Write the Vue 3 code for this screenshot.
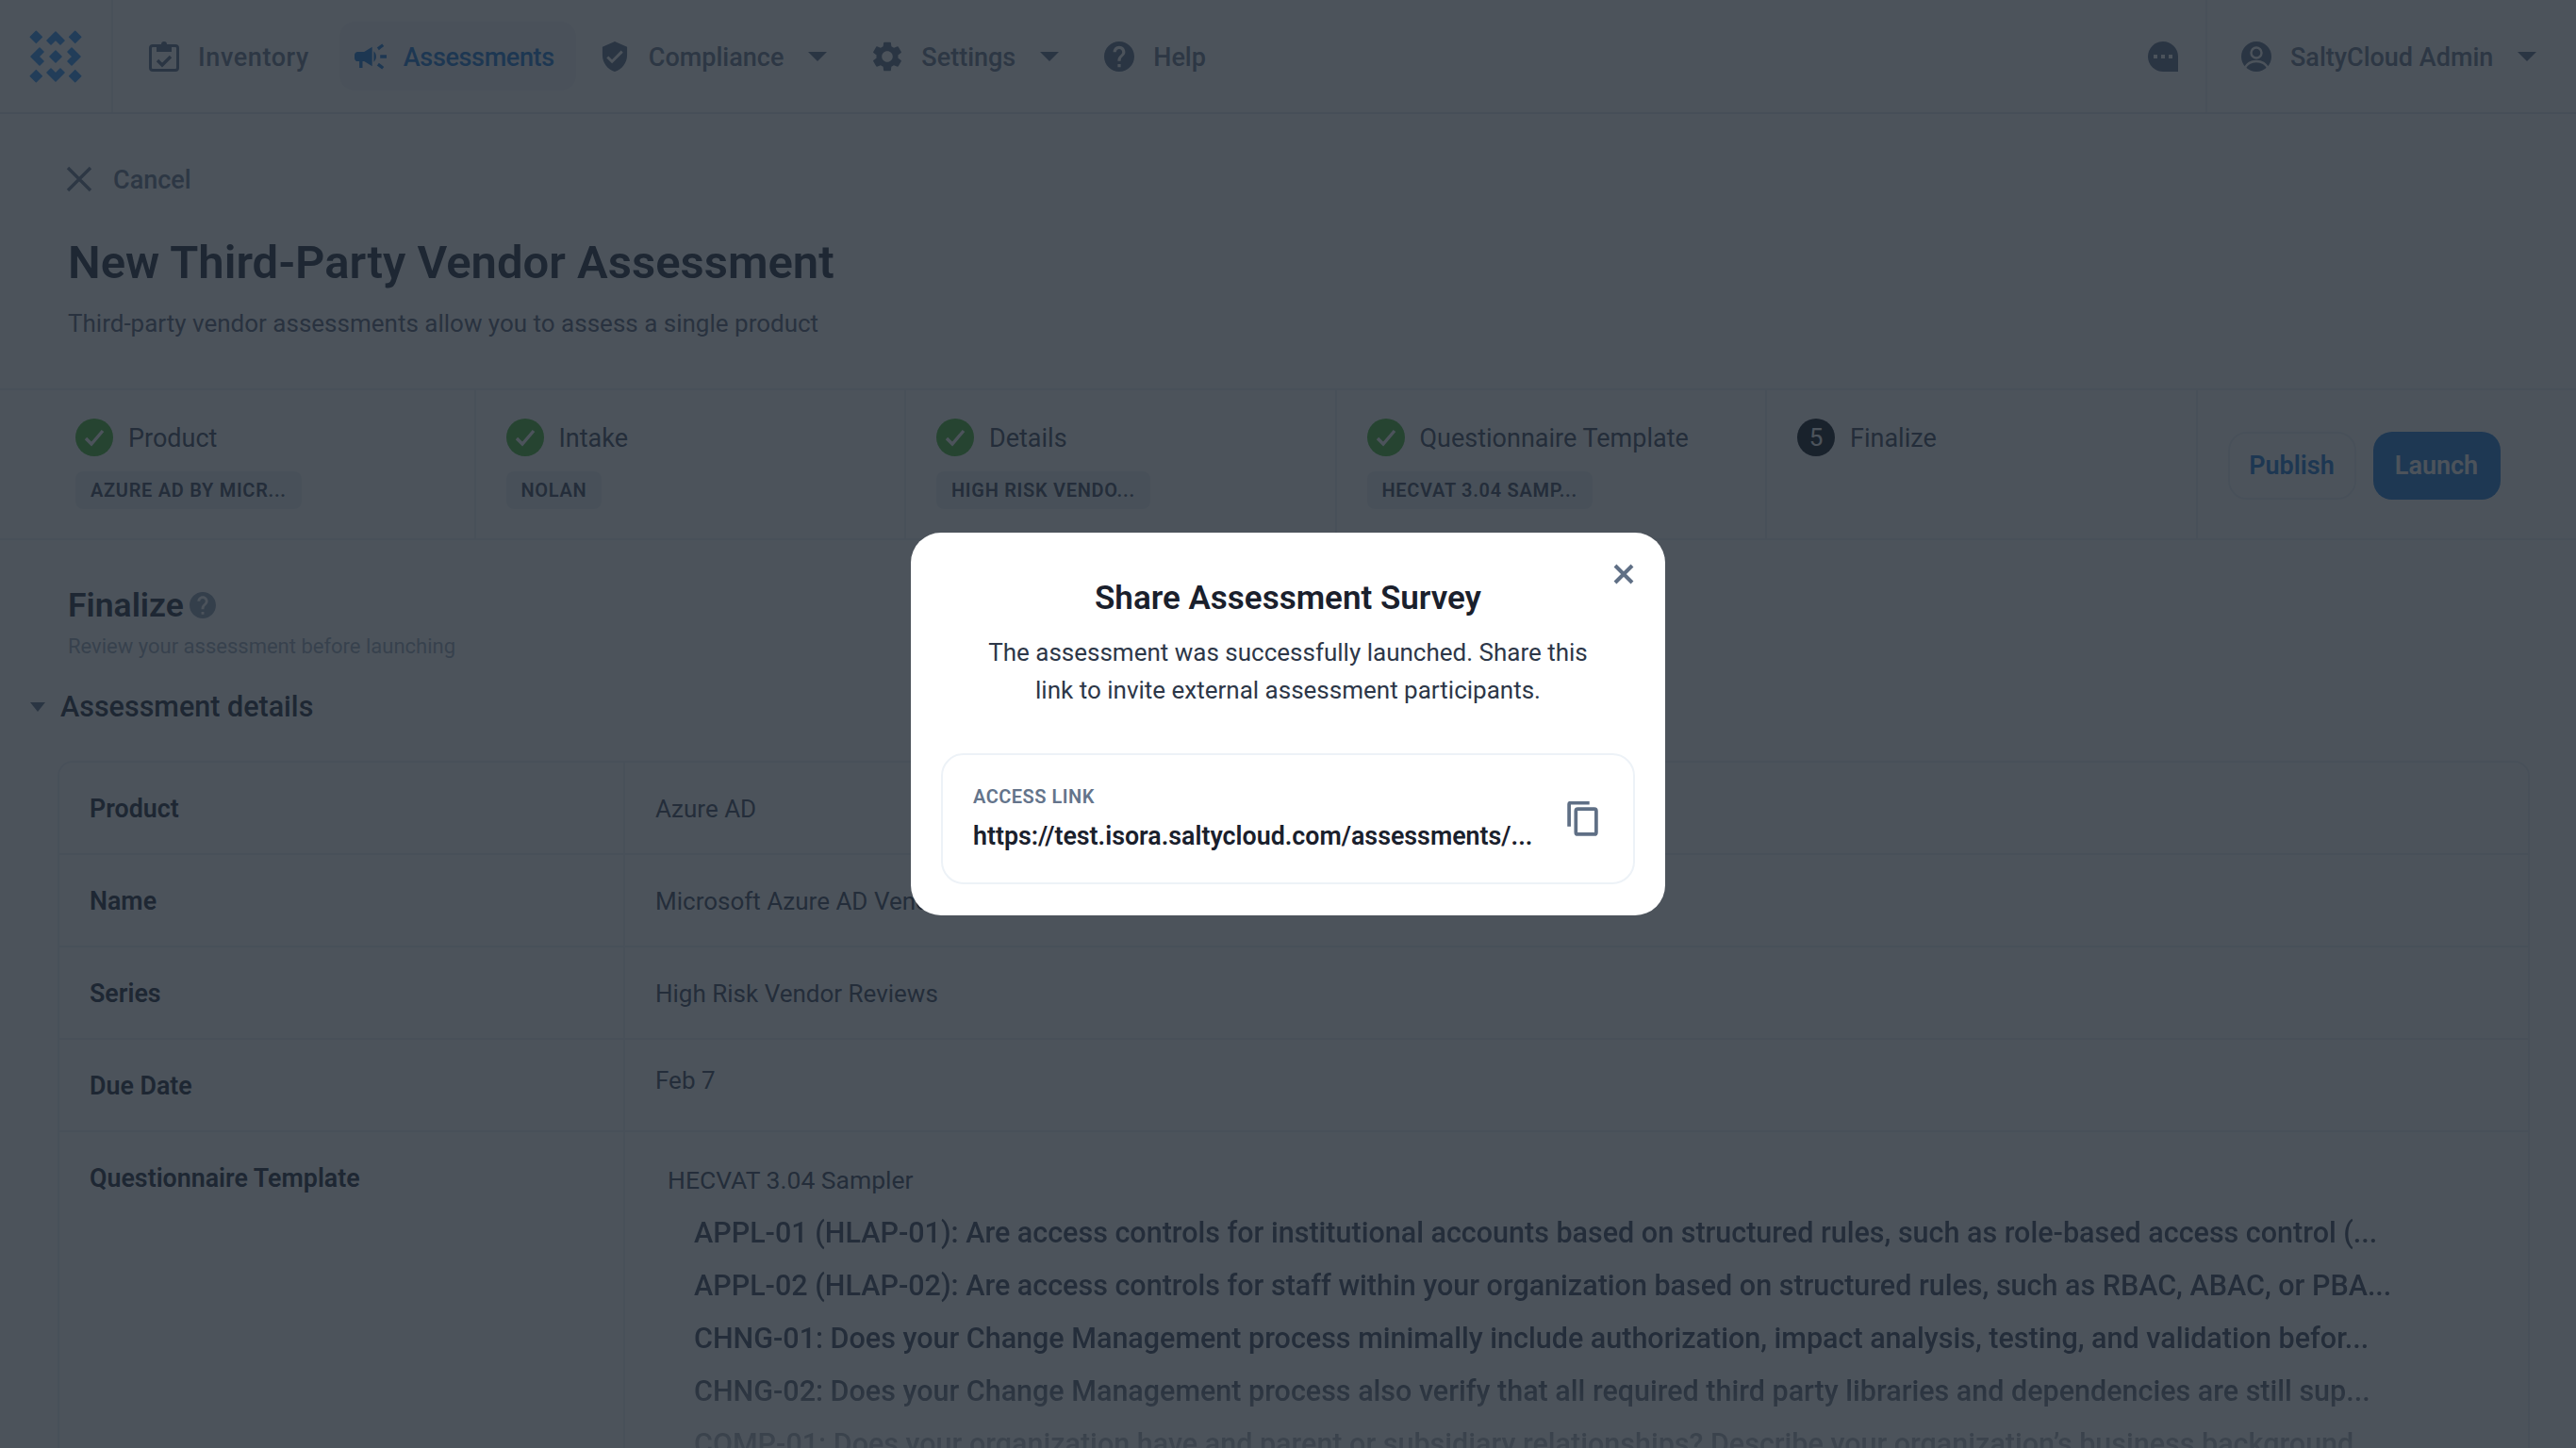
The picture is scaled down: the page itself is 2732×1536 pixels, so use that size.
<script setup>
const navItems = [
  { label: 'Inventory', icon: 'clipboard', textClass: 'spaced' },
  { label: 'Assessments', icon: 'campaign', active: true, textClass: 'tight' },
  { label: 'Compliance', icon: 'shield', caret: true },
  { label: 'Settings', icon: 'gear', caret: true },
  { label: 'Help', icon: 'help' },
];

const icons = {
  campaign: 'M18 11v2h4v-2h-4zm-2 6.61c.96.71 2.21 1.65 3.2 2.39.4-.53.8-1.07 1.2-1.6-.99-.74-2.24-1.68-3.2-2.4-.4.54-.8 1.08-1.2 1.61zM20.4 5.6c-.4-.53-.8-1.07-1.2-1.6-.99.74-2.24 1.68-3.2 2.4.4.53.8 1.07 1.2 1.6.96-.72 2.21-1.65 3.2-2.4zM4 9c-1.1 0-2 .9-2 2v2c0 1.1.9 2 2 2h1v4h2v-4h1l5 3V6L8 9H4zm11.5 3c0-1.33-.58-2.53-1.5-3.35v6.69c.92-.81 1.5-2.01 1.5-3.34z',
  shield: 'M12 1L3 5v6c0 5.55 3.84 10.74 9 12 5.16-1.26 9-6.45 9-12V5l-9-4zm-2 16l-4-4 1.41-1.41L10 14.17l6.59-6.59L18 9l-8 8z',
  gear: 'M19.14 12.94c.04-.3.06-.61.06-.94 0-.32-.02-.64-.07-.94l2.03-1.58a.49.49 0 0 0 .12-.61l-1.92-3.32a.488.488 0 0 0-.59-.22l-2.39.96c-.5-.38-1.03-.7-1.62-.94l-.36-2.54a.484.484 0 0 0-.48-.41h-3.84c-.24 0-.43.17-.47.41l-.36 2.54c-.59.24-1.13.57-1.62.94l-2.39-.96c-.22-.08-.47 0-.59.22L2.74 8.87c-.12.21-.08.47.12.61l2.03 1.58c-.05.3-.09.63-.09.94s.02.64.07.94l-2.03 1.58a.49.49 0 0 0-.12.61l1.92 3.32c.12.22.37.29.59.22l2.39-.96c.5.38 1.03.7 1.62.94l.36 2.54c.05.24.24.41.48.41h3.84c.24 0 .44-.17.47-.41l.36-2.54c.59-.24 1.13-.56 1.62-.94l2.39.96c.22.08.47 0 .59-.22l1.92-3.32c.12-.22.07-.47-.12-.61l-2.01-1.58zM12 15.6c-1.98 0-3.6-1.62-3.6-3.6s1.62-3.6 3.6-3.6 3.6 1.62 3.6 3.6-1.62 3.6-3.6 3.6z',
  help: 'M12 2C6.48 2 2 6.48 2 12s4.48 10 10 10 10-4.48 10-10S17.52 2 12 2zm1 17h-2v-2h2v2zm2.07-7.75l-.9.92C13.45 12.9 13 13.5 13 15h-2v-.5c0-1.1.45-2.1 1.17-2.83l1.24-1.26c.37-.36.59-.86.59-1.41 0-1.1-.9-2-2-2s-2 .9-2 2H8c0-2.21 1.79-4 4-4s4 1.79 4 4c0 .88-.36 1.68-.93 2.25z',
};

const steps = [
  { label: 'Product', tag: 'AZURE AD BY MICR...', done: true },
  { label: 'Intake', tag: 'NOLAN', done: true },
  { label: 'Details', tag: 'HIGH RISK VENDO...', done: true },
  { label: 'Questionnaire Template', tag: 'HECVAT 3.04 SAMP...', done: true },
  { label: 'Finalize', number: 5 },
];

const details = [
  { label: 'Product', value: 'Azure AD' },
  { label: 'Name', value: 'Microsoft Azure AD Vendor Review' },
  { label: 'Series', value: 'High Risk Vendor Reviews' },
  { label: 'Due Date', value: 'Feb 7', raised: true },
];

const questions = [
  'APPL-01 (HLAP-01): Are access controls for institutional accounts based on structured rules, such as role-based access control (...',
  'APPL-02 (HLAP-02): Are access controls for staff within your organization based on structured rules, such as RBAC, ABAC, or PBA...',
  'CHNG-01: Does your Change Management process minimally include authorization, impact analysis, testing, and validation befor...',
  'CHNG-02: Does your Change Management process also verify that all required third party libraries and dependencies are still sup...',
  'COMP-01: Does your organization have and parent or subsidiary relationships? Describe your organization’s business background...',
];

const logoDiamonds = [
  [19.3, 19.3],
  [60.7, 19.3],
  [40, 40],
  [19.3, 60.7],
  [60.7, 60.7],
];

const diamondPoints = ([x, y]) => `${x},${y - 6} ${x + 6},${y} ${x},${y + 6} ${x - 6},${y}`;
</script>

<template>
  <div class="page">
    <header class="nav">
      <div class="logo-cell">
        <svg class="logo" viewBox="9 9 62 62" width="62" height="62">
          <g fill="#3f9bf5" stroke="#3f9bf5" stroke-width="1.6" stroke-linejoin="round">
            <polygon v-for="d in logoDiamonds" :key="d.join()" :points="diamondPoints(d)" />
            <polygon points="40,14 49,23 45,27 40,22 35,27 31,23" />
            <polygon points="40,66 49,57 45,53 40,58 35,53 31,57" />
            <polygon points="14,40 23,31 27,35 22,40 27,45 23,49" />
            <polygon points="66,40 57,31 53,35 58,40 53,45 57,49" />
          </g>
        </svg>
      </div>

      <nav class="nav-items">
        <a v-for="item in navItems" :key="item.label" class="nav-item" :class="{ active: item.active }">
          <svg v-if="item.icon === 'clipboard'" class="nav-icon" viewBox="0 0 32 32">
            <rect x="1.5" y="4.5" width="29" height="26" rx="2.5" fill="none" stroke="currentColor" stroke-width="3" />
            <path d="M8 3h5a3 3 0 0 1 6 0h5v8H8z" fill="currentColor" />
            <path d="M9 20l5 5 9-9" fill="none" stroke="currentColor" stroke-width="3.4" />
          </svg>
          <svg v-else-if="item.icon === 'campaign'" class="nav-icon wide" viewBox="2 4 20 16">
            <path :d="icons.campaign" fill="currentColor" />
          </svg>
          <svg v-else class="nav-icon" :viewBox="item.icon === 'shield' ? '3 1 18 22' : '2.4 2 19.2 20'">
            <path :d="icons[item.icon]" fill="currentColor" />
          </svg>
          <span :class="item.textClass">{{ item.label }}</span>
          <i v-if="item.caret" class="caret"></i>
        </a>
      </nav>

      <div class="nav-right">
        <div class="chat-cell">
          <svg class="nav-icon" viewBox="0 0 32 32">
            <path d="M16 0a16 16 0 0 0 0 32h16V16A16 16 0 0 0 16 0z" fill="currentColor" />
            <path d="M6 14h4v4H6zM14 14h4v4h-4zM22 14h4v4h-4z" fill="#fff" />
          </svg>
        </div>
        <div class="user-cell">
          <svg class="nav-icon" viewBox="0 0 32 32">
            <circle cx="16" cy="16" r="16" fill="currentColor" />
            <circle cx="16" cy="12" r="5.500" fill="currentColor" stroke="#fff" stroke-width="2.4" />
            <path d="M3.500 28.500c3-6 8.500-7.500 12.500-7.500s9.500 1.500 12.500 7.500" fill="none" stroke="#fff" stroke-width="2.4" />
          </svg>
          <span>SaltyCloud Admin</span>
          <i class="caret"></i>
        </div>
      </div>
    </header>

    <main>
      <div class="cancel">
        <svg viewBox="0 0 28 28" width="28" height="28">
          <path d="M2 2l24 24M26 2L2 26" fill="none" stroke="currentColor" stroke-width="3.4" />
        </svg>
        <span>Cancel</span>
      </div>
      <h1 class="title">New Third-Party Vendor Assessment</h1>
      <p class="subtitle">Third-party vendor assessments allow you to assess a single product</p>

      <section class="steps">
        <div v-for="step in steps" :key="step.label" class="step">
          <div class="step-head">
            <span class="step-badge" :class="{ done: step.done }">
              <svg v-if="step.done" viewBox="0 0 40 40" width="40" height="40">
                <path d="M11 21l6 6 12-14" fill="none" stroke="#fff" stroke-width="3.4" />
              </svg>
              <template v-else>{{ step.number }}</template>
            </span>
            <span class="step-label">{{ step.label }}</span>
          </div>
          <span v-if="step.tag" class="tag">{{ step.tag }}</span>
        </div>
        <div class="step-actions">
          <button class="btn btn-ghost">Publish</button>
          <button class="btn btn-primary">Launch</button>
        </div>
      </section>

      <div class="section-head">
        <h2>Finalize</h2>
        <svg viewBox="2 2 20 20" width="28" height="28">
          <path :d="icons.help" fill="currentColor" />
        </svg>
      </div>
      <p class="section-sub">Review your assessment before launching</p>

      <h3 class="details-head"><i class="caret small"></i>Assessment details</h3>

      <div class="table">
        <div v-for="row in details" :key="row.label" class="row">
          <div class="cell-label">{{ row.label }}</div>
          <div class="cell-value" :class="{ raised: row.raised }">{{ row.value }}</div>
        </div>
        <div class="row row-template">
          <div class="cell-label">Questionnaire Template</div>
          <div class="cell-value">
            <div class="template-name">HECVAT 3.04 Sampler</div>
            <ul class="questions">
              <li v-for="q in questions" :key="q">{{ q }}</li>
            </ul>
          </div>
        </div>
      </div>
    </main>

    <div class="overlay">
      <div class="modal">
        <svg class="close" viewBox="0 0 24 24" width="24" height="24">
          <path d="M3 3l18 18M21 3L3 21" fill="none" stroke="currentColor" stroke-width="4" />
        </svg>
        <h2 class="modal-title">Share Assessment Survey</h2>
        <p class="modal-text">The assessment was successfully launched. Share this link to invite external assessment participants.</p>
        <div class="link-box">
          <div class="link-body">
            <div class="link-label">ACCESS LINK</div>
            <div class="link-url">https://test.isora.saltycloud.com/assessments/...</div>
          </div>
          <svg class="copy" viewBox="0 0 32 36" width="33" height="37">
            <path d="M2 26V3a1.500 1.500 0 0 1 1.500-1.500H23" fill="none" stroke="currentColor" stroke-width="3.600" />
            <rect x="9" y="8" width="21" height="26" rx="2" fill="none" stroke="currentColor" stroke-width="3.600" />
          </svg>
        </div>
      </div>
    </div>
  </div>
</template>

<style scoped>
.page {
  position: relative;
  width: 2732px;
  height: 1536px;
  overflow: hidden;
  background: #fff;
  font-family: Roboto, "Noto Sans", sans-serif;
  color: #4a5568;
  font-size: 26px;
}
.nav {
  display: flex;
  height: 121px;
  border-bottom: 2px solid #e2e8f0;
  box-sizing: border-box;
}
.logo-cell {
  width: 120px;
  flex: none;
  display: flex;
  align-items: center;
  justify-content: center;
  border-right: 2px solid #edf2f7;
  box-sizing: border-box;
}
.nav-items {
  display: flex;
  align-items: center;
  gap: 9px;
  padding-left: 22px;
}
.nav-item {
  display: flex;
  align-items: center;
  height: 73px;
  padding: 0 23px 0 16px;
  border-radius: 16px;
  color: #718096;
  font-size: 27px;
  font-weight: 500;
}
.nav-item.active {
  background: #f4f6f9;
  color: #2c7fd6;
}
.nav-item span {
  margin-left: 20px;
  padding-top: 2px;
}
.nav-item .spaced {
  letter-spacing: 0.6px;
}
.nav-item .tight {
  letter-spacing: -0.35px;
}
.nav-icon {
  width: 32px;
  height: 32px;
  flex: none;
  color: #667892;
}
.nav-icon.wide {
  width: 34px;
  margin-right: -2px;
}
.active .nav-icon {
  color: #2c7fd6;
}
.caret {
  display: inline-block;
  width: 0;
  height: 0;
  margin-left: 26px;
  border-left: 10px solid transparent;
  border-right: 10px solid transparent;
  border-top: 10px solid #667892;
}
.nav-right {
  margin-left: auto;
  display: flex;
  align-items: stretch;
}
.chat-cell {
  display: flex;
  align-items: center;
  padding-right: 29px;
  border-right: 2px solid #edf2f7;
}
.user-cell {
  display: flex;
  align-items: center;
  width: 391px;
  padding-left: 36px;
  box-sizing: border-box;
  color: #718096;
  font-size: 27px;
  font-weight: 500;
}
.user-cell span {
  margin-left: 20px;
  padding-top: 2px;
}
.cancel {
  display: flex;
  align-items: center;
  gap: 22px;
  height: 40px;
  margin: 49px 0 0 70px;
  color: #718096;
  font-size: 27px;
  font-weight: 500;
}
.cancel span {
  padding-top: 2px;
}
.title {
  margin: 39px 0 0 72px;
  font-size: 49px;
  line-height: 60px;
  font-weight: 600;
  color: #2d3748;
}
.subtitle {
  margin: 15px 0 0 72px;
  line-height: 38px;
  color: #5f6b80;
}
.steps {
  display: flex;
  height: 161px;
  margin-top: 50px;
  padding-left: 48px;
  border-top: 2px solid #edf2f7;
  border-bottom: 2px solid #edf2f7;
  box-sizing: border-box;
}
.step {
  width: 456.500px;
  flex: none;
  padding: 30px 0 0 32px;
  border-right: 2px solid #edf2f7;
  box-sizing: border-box;
}
.step-head {
  display: flex;
  align-items: center;
  gap: 16px;
  height: 40px;
  font-size: 27px;
}
.step-label {
  padding-top: 2px;
}
.step-badge {
  display: flex;
  align-items: center;
  justify-content: center;
  width: 40px;
  height: 40px;
  border-radius: 50%;
  background: #1a202c;
  color: #fff;
  font-size: 26px;
}
.step-badge.done {
  background: #52ba40;
}
.tag {
  display: inline-block;
  margin-top: 16px;
  padding: 0 16px;
  line-height: 40px;
  border-radius: 8px;
  background: #edf2f7;
  font-size: 20px;
  font-weight: 600;
  letter-spacing: 0.7px;
}
.step-actions {
  display: flex;
  align-items: center;
  gap: 18px;
  padding-left: 32px;
  margin-top: 2px;
}
.btn {
  height: 72px;
  border-radius: 20px;
  font: 600 27px Roboto, sans-serif;
}
.btn-ghost {
  width: 136px;
  background: #fff;
  border: 2px solid #edf2f7;
  color: #2c7fd6;
}
.btn-primary {
  width: 135px;
  background: #2d83da;
  border: 0;
  color: #fff;
}
.section-head {
  display: flex;
  align-items: center;
  gap: 6px;
  margin: 45px 0 0 72px;
  height: 48px;
  color: #94a3b8;
}
.section-head h2 {
  margin: 0;
  font-size: 35.500px;
  font-weight: 600;
  color: #2d3748;
}
.section-sub {
  margin: 4px 0 0 72px;
  font-size: 22px;
  line-height: 32px;
  color: #a0aec0;
}
.details-head {
  display: flex;
  align-items: center;
  margin: 26px 0 0 32px;
  font-size: 30.500px;
  line-height: 44px;
  font-weight: 500;
  color: #2d3748;
}
.caret.small {
  margin: 0 16px 0 0;
  border-left-width: 8px;
  border-right-width: 8px;
  border-top-width: 10px;
}
.table {
  margin: 35px 49px 0 61px;
  border: 2px solid #edf2f7;
  border-radius: 16px 16px 0 0;
}
.row {
  display: grid;
  grid-template-columns: 600px 1fr;
  height: 98px;
  border-bottom: 2px solid #edf2f7;
  box-sizing: border-box;
}
.cell-label {
  display: flex;
  align-items: center;
  padding: 2px 0 0 32px;
  font-size: 26.800px;
  font-weight: 600;
  color: #2d3748;
  border-right: 2px solid #edf2f7;
}
.cell-value {
  display: flex;
  align-items: center;
  padding: 1px 0 0 32px;
}
.cell-value.raised {
  padding: 0 0 11px 32px;
}
.row-template {
  height: 500px;
  border-bottom: 0;
}
.row-template .cell-label {
  align-items: flex-start;
  padding-top: 29px;
  line-height: 40px;
}
.row-template .cell-value {
  display: block;
  padding: 31px 0 0 45px;
}
.template-name {
  line-height: 40px;
  font-size: 26.500px;
}
.questions {
  list-style: none;
  margin: 8px 0 0;
  padding: 0 0 0 28px;
  font-size: 30.500px;
  font-weight: 500;
  line-height: 56px;
  white-space: nowrap;
  -webkit-mask-image: linear-gradient(#000 170px, transparent 300px);
  mask-image: linear-gradient(#000 170px, transparent 300px);
}
.overlay {
  position: absolute;
  inset: 0;
  display: flex;
  align-items: center;
  justify-content: center;
  background: rgba(26, 35, 45, 0.78);
}
.modal {
  position: relative;
  width: 800px;
  height: 406px;
  padding: 46px 32px 33px;
  border-radius: 32px;
  background: #fff;
  box-sizing: border-box;
}
.close {
  position: absolute;
  top: 32px;
  right: 32px;
  color: #5f6f85;
}
.modal-title {
  margin: 0;
  text-align: center;
  font-size: 35px;
  line-height: 48px;
  font-weight: 600;
  color: #1a202c;
}
.modal-text {
  margin: 13px 30px 0;
  text-align: center;
  line-height: 40px;
  color: #2d3748;
}
.link-box {
  display: flex;
  align-items: center;
  justify-content: space-between;
  height: 139px;
  margin-top: 47px;
  padding: 0 37px 0 32px;
  border: 2px solid #edf2f7;
  border-radius: 24px;
  box-sizing: border-box;
}
.link-label {
  font-size: 20px;
  line-height: 28px;
  font-weight: 600;
  letter-spacing: 0.5px;
  color: #64748b;
}
.link-url {
  margin-top: 8px;
  font-size: 26.800px;
  line-height: 40px;
  font-weight: 600;
  color: #1a202c;
}
.copy {
  color: #5f6f85;
}
</style>
